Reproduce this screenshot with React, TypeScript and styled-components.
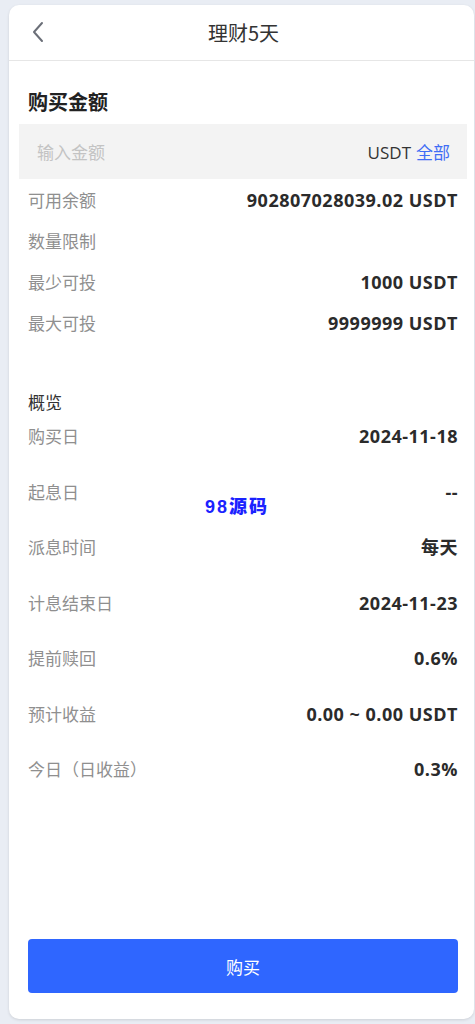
import React from "react";
import styled, { createGlobalStyle } from "styled-components";

const Global = createGlobalStyle`
  html, body { margin: 0; padding: 0; background: #e9edf4; }
  body { font-family: "Noto Sans", "Noto Sans CJK SC", sans-serif; }
  * { box-sizing: border-box; }
`;

const Page = styled.div`
  padding: 5px 1px 5px 9px;
  min-height: 1024px;
`;

const Card = styled.div`
  position: relative;
  height: 1014px;
  background: #fff;
  border-radius: 10px;
  box-shadow: 0 1px 3px rgba(0, 0, 0, 0.12);
  display: flex;
  flex-direction: column;
`;

const Header = styled.div`
  position: relative;
  height: 56px;
  border-bottom: 1px solid #e6e6e6;
  display: flex;
  align-items: center;
  justify-content: center;
`;

const Back = styled.div`
  position: absolute;
  left: 22px;
  top: 16px;
  width: 16px;
  height: 22px;
  display: flex;
  align-items: center;
`;

const Title = styled.div`
  font-size: 20px;
  color: #333;
  font-family: "Noto Sans CJK SC", sans-serif;
  padding-left: 4px;
`;

const Body = styled.div`
  flex: 1;
  display: flex;
  flex-direction: column;
  padding: 0 16px 26px 19px;
`;

const SectionTitle = styled.div`
  margin-top: 27px;
  height: 28px;
  line-height: 28px;
  font-size: 20px;
  font-weight: 700;
  color: #222;
  font-family: "Noto Sans CJK SC", sans-serif;
`;

const InputBox = styled.div`
  margin: 8px -9px 0 -9px;
  height: 55px;
  background: #f3f3f3;
  display: flex;
  align-items: center;
  justify-content: space-between;
  padding: 0 17px 0 18px;
  font-size: 17px;
`;

const Placeholder = styled.span`
  color: #c3c3c3;
  font-family: "Noto Sans CJK SC", sans-serif;
`;

const Unit = styled.span`
  color: #333;
  font-family: "Open Sans", "Noto Sans CJK SC", sans-serif;
`;

const AllLink = styled.span`
  color: #3f6df5;
  margin-left: 5px;
  font-family: "Noto Sans CJK SC", sans-serif;
`;

const InfoRow = styled.div`
  height: 41px;
  display: flex;
  align-items: center;
  justify-content: space-between;
  font-size: 17px;
`;

const Label = styled.span`
  color: #8f8f8f;
  font-size: 17px;
  font-family: "Noto Sans CJK SC", sans-serif;
`;

const Value = styled.span`
  color: #2b2b2b;
  font-weight: 700;
  font-size: 18px;
  letter-spacing: 0.5px;
  font-family: "Open Sans", "Noto Sans CJK SC", sans-serif;
`;

const OverviewTitle = styled.div`
  margin-top: 47px;
  height: 24px;
  line-height: 24px;
  font-size: 17px;
  color: #333;
  font-family: "Noto Sans CJK SC", sans-serif;
`;

const OverviewList = styled.div`
  display: flex;
  flex-direction: column;
`;

const OverviewRow = styled.div`
  margin-top: 10px;
  height: 45.5px;
  display: flex;
  align-items: flex-start;
  justify-content: space-between;
  line-height: 24px;
`;

const Spacer = styled.div`
  flex: 1;
`;

const BuyButton = styled.button`
  width: 430px;
  height: 54px;
  border: none;
  border-radius: 4px;
  background: #2f66ff;
  color: #fff;
  font-size: 17px;
  font-family: "Noto Sans CJK SC", sans-serif;
  cursor: pointer;
`;

const Watermark = styled.div`
  position: absolute;
  left: 196px;
  top: 487px;
  font-size: 18px;
  font-weight: 900;
  color: #1a22ff;
  letter-spacing: 2px;
  font-family: "Liberation Sans", "Noto Sans CJK SC", sans-serif;
`;

const limits = [
  ["可用余额", "902807028039.02 USDT"],
  ["数量限制", ""],
  ["最少可投", "1000 USDT"],
  ["最大可投", "9999999 USDT"],
];

const overview = [
  ["购买日", "2024-11-18"],
  ["起息日", "--"],
  ["派息时间", "每天"],
  ["计息结束日", "2024-11-23"],
  ["提前赎回", "0.6%"],
  ["预计收益", "0.00 ~ 0.00 USDT"],
  ["今日（日收益）", "0.3%"],
];

export default function App() {
  return (
    <>
      <Global />
      <Page>
        <Card>
          <Header>
            <Back>
              <svg width="14" height="22" viewBox="0 0 14 22" fill="none">
                <path d="M11 2 L3 11 L11 20" stroke="#6b6f78" strokeWidth="2" strokeLinecap="round" strokeLinejoin="round" />
              </svg>
            </Back>
            <Title>理财5天</Title>
          </Header>
          <Body>
            <SectionTitle>购买金额</SectionTitle>
            <InputBox>
              <Placeholder>输入金额</Placeholder>
              <span>
                <Unit>USDT</Unit>
                <AllLink>全部</AllLink>
              </span>
            </InputBox>
            {limits.map(([l, v]) => (
              <InfoRow key={l}>
                <Label>{l}</Label>
                <Value>{v}</Value>
              </InfoRow>
            ))}
            <OverviewTitle>概览</OverviewTitle>
            <OverviewList>
              {overview.map(([l, v]) => (
                <OverviewRow key={l}>
                  <Label>{l}</Label>
                  <Value>{v}</Value>
                </OverviewRow>
              ))}
            </OverviewList>
            <Spacer />
            <BuyButton>购买</BuyButton>
          </Body>
          <Watermark>98源码</Watermark>
        </Card>
      </Page>
    </>
  );
}
